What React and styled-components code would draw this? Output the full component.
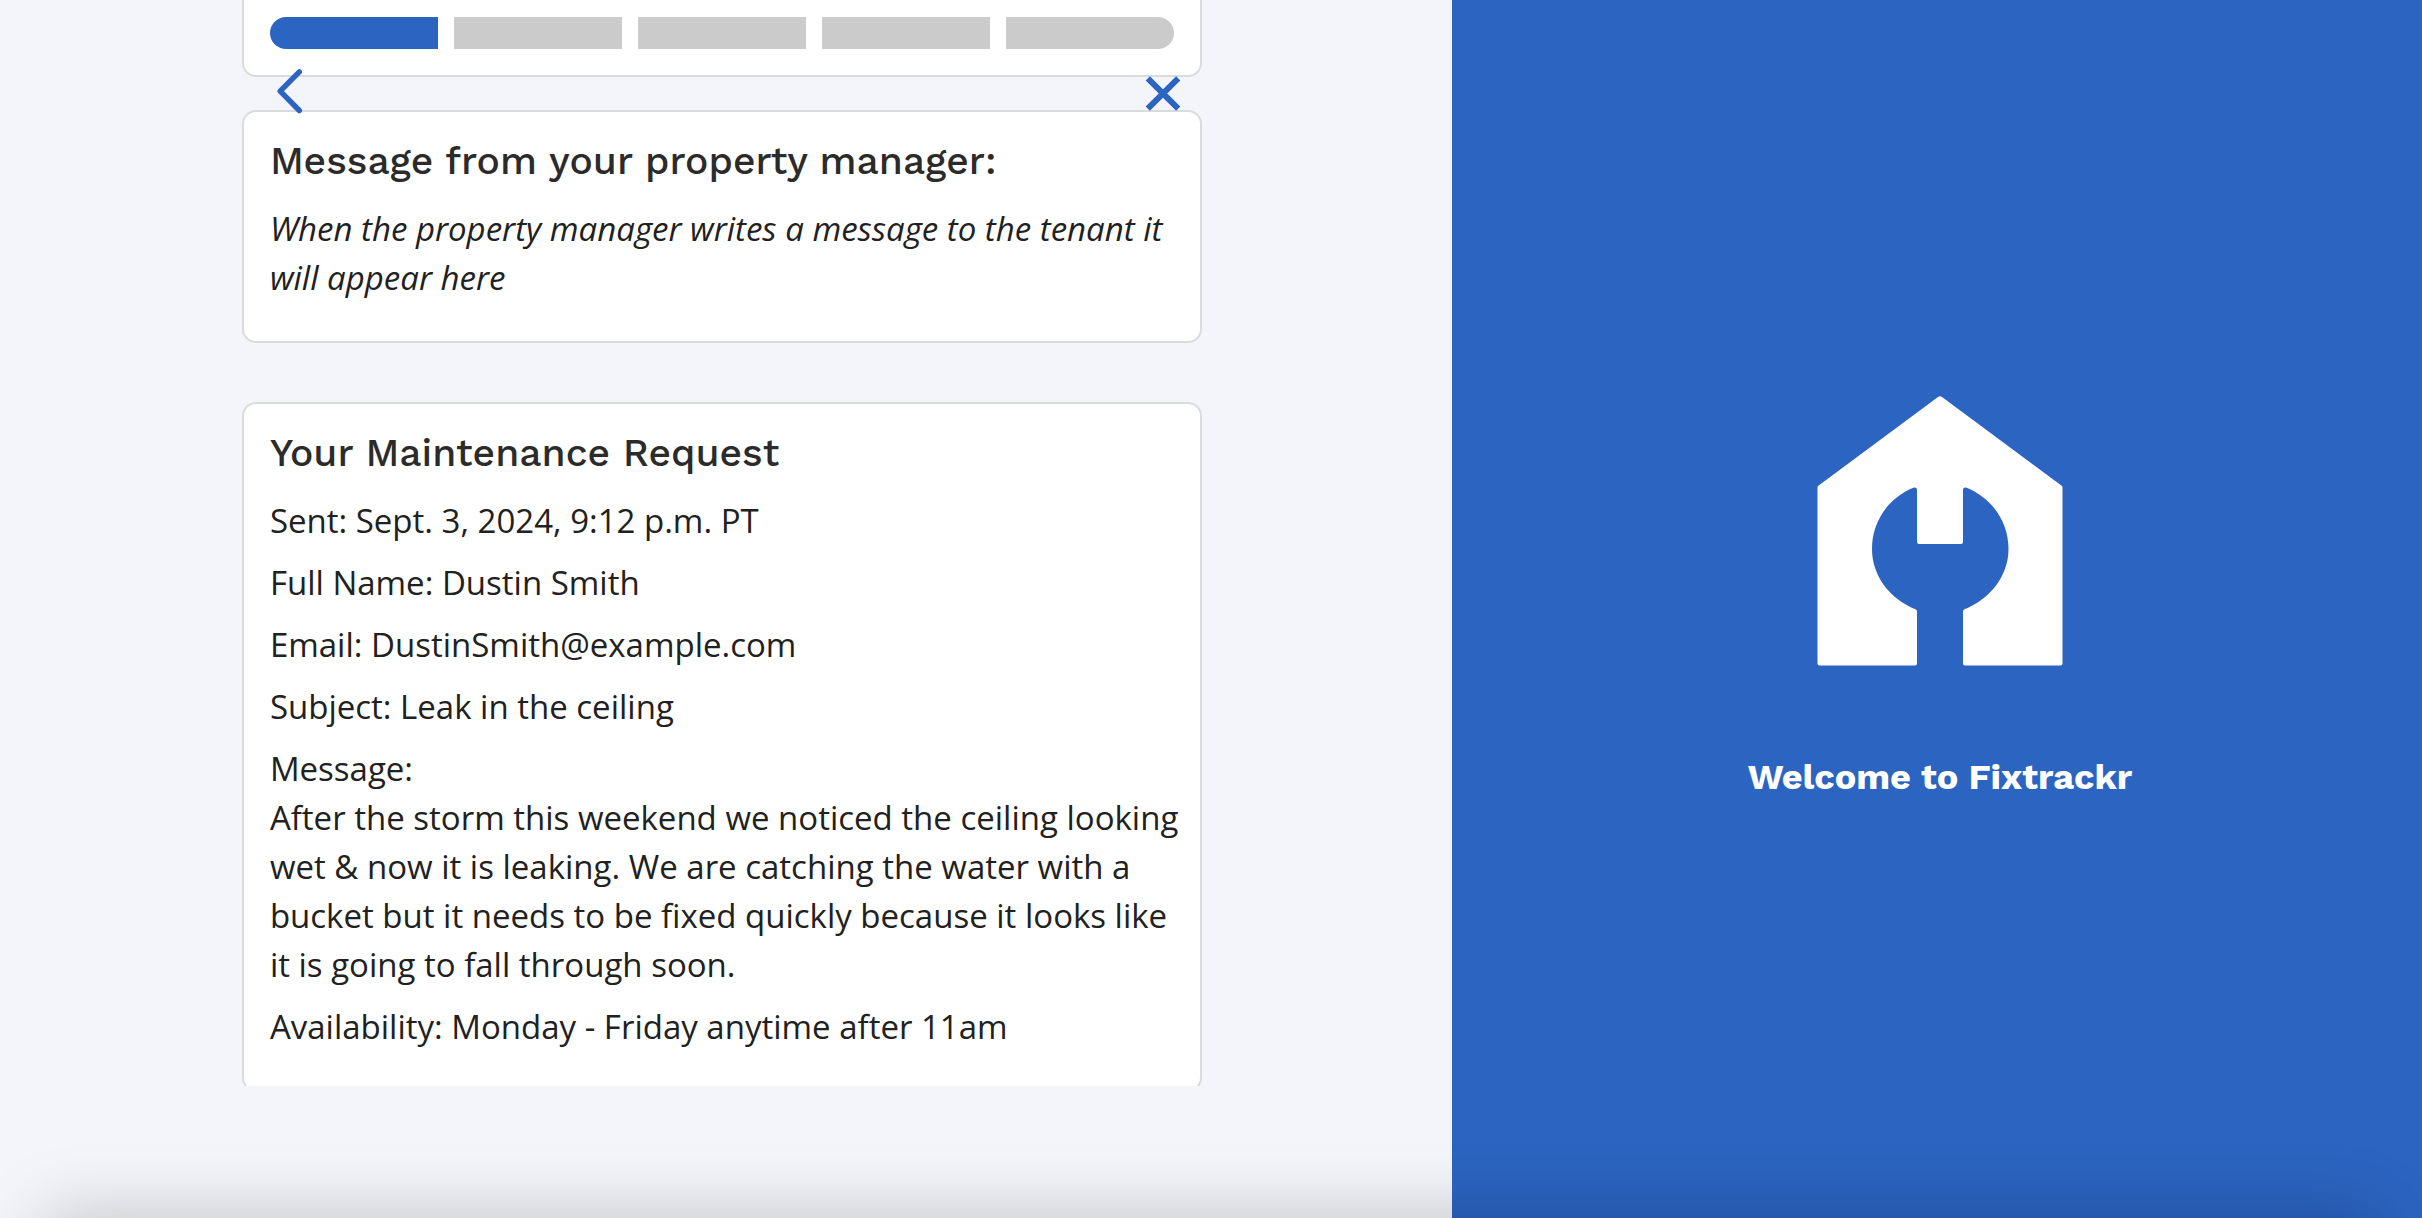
import React from "react";
import styled, { createGlobalStyle } from "styled-components";

const BLUE = "#2b64c1";

const GlobalStyle = createGlobalStyle`
  *, *::before, *::after { box-sizing: border-box; }
  body {
    margin: 0;
    background: #f3f5fa;
    color: #212121;
    font-family: "Open Sans", sans-serif;
    font-size: 33px;
    line-height: 49px;
  }
`;

const Page = styled.div`
  position: relative;
  display: flex;
  height: 100vh;
  overflow: hidden;
`;

const RequestPane = styled.main`
  flex: 0 0 59.95%;
  padding: 0 8px 132px 0;
`;

const ScrollArea = styled.div`
  display: flex;
  flex-direction: column;
  align-items: center;
  height: 100%;
  overflow: hidden;
`;

const Column = styled.div`
  display: flex;
  flex-direction: column;
  flex-shrink: 0;
  width: 66.5%;
`;

const Card = styled.section`
  padding: 26px 20px 26px 26px;
  background: #fff;
  border: 2px solid #dadcdc;
  border-radius: 14px;

  & + & { margin-top: 59px; }
`;

const ProgressCard = styled(Card)`
  padding: 17px 26px 26px;
  border-top: 0;
  border-radius: 0 0 14px 14px;
`;

const Steps = styled.ol`
  display: flex;
  gap: 16px;
  margin: 0;
  padding: 0;
  list-style: none;
`;

const Step = styled.li`
  flex: 1;
  height: 32px;
  background: ${(p) => (p.$done ? BLUE : "#cbcbcb")};

  &:first-child { border-radius: 16px 0 0 16px; }
  &:last-child { border-radius: 0 16px 16px 0; }
`;

const Nav = styled.nav`
  position: relative;
  z-index: 1;
  display: flex;
  align-items: center;
  justify-content: space-between;
  height: 33px;
  padding: 0 16px 0 24px;
`;

const IconButton = styled.button`
  display: flex;
  padding: 0;
  border: 0;
  background: none;
  color: ${BLUE};
  cursor: pointer;
`;

const Heading = styled.h2`
  margin: 0 0 20px;
  font-family: "Work Sans", Inter, sans-serif;
  font-size: 39px;
  font-weight: 500;
  line-height: 46px;
  color: #2b2b2b;
`;

const Text = styled.p`
  margin: 0 0 13px;
  font-style: ${(p) => (p.$italic ? "italic" : "normal")};
`;

const BrandPane = styled.aside`
  flex: 1;
  display: flex;
  flex-direction: column;
  align-items: center;
  justify-content: center;
  gap: 88px;
  padding: 0 0 22px 6px;
  background: ${BLUE};
  color: #fff;
`;

const Welcome = styled.h1`
  margin: 0;
  font-family: "Work Sans", Inter, sans-serif;
  font-size: 36px;
  font-weight: 700;
  line-height: 46px;
`;

const BottomShade = styled.div`
  position: absolute;
  top: 100%;
  left: 45px;
  right: 45px;
  height: 200px;
  box-shadow: 0 0 75px rgba(0, 0, 0, 0.22);
  pointer-events: none;
`;

function BackIcon() {
  return (
    <svg width="48" height="50" viewBox="0 0 48 50" fill="none" stroke="currentColor" strokeWidth="5.4" strokeLinecap="round" strokeLinejoin="round" aria-hidden="true">
      <path d="M33.300 2.900 14.200 22.200 33.300 41.500" />
    </svg>
  );
}

function CloseIcon() {
  return (
    <svg width="46" height="46" viewBox="0 0 46 46" fill="none" stroke="currentColor" strokeWidth="6" aria-hidden="true">
      <path d="M7.800 7.300 38.200 37.700M38.200 7.300 7.800 37.700" />
    </svg>
  );
}

function Logo() {
  return (
    <svg width="246" height="270" viewBox="0 0 246 270" role="img" aria-label="Fixtrackr logo">
      <path
        fill="#fff"
        d="M121 1Q123 -.4 125 1L245 90Q245.500 90.500 245.500 91.500V267.500Q245.500 269.500 243.500 269.500H148Q146 269.500 146 267.500V215.500Q146 214 147.500 213.300C173 203 191.500 180 191.500 153C191.500 125 174 101.500 149.500 91.800Q146 90.800 146 94V146Q146 148 144 148H102Q100 148 100 146V94Q100 90.800 96.500 91.800C72 101.500 55 125 55 153C55 180 73 203 98.500 213.300Q100 214 100 215.500V267.500Q100 269.500 98 269.500H2.500Q.5 269.500 .5 267.500V91.500Q.5 90.500 1 90Z"
      />
    </svg>
  );
}

const STEPS = [true, false, false, false, false];

const DETAILS = [
  "Sent: Sept. 3, 2024, 9:12 p.m. PT",
  "Full Name: Dustin Smith",
  "Email: DustinSmith@example.com",
  "Subject: Leak in the ceiling",
];

export default function App() {
  return (
    <>
      <GlobalStyle />
      <Page>
        <RequestPane>
          <ScrollArea>
            <Column>
              <ProgressCard as="div">
                <Steps aria-label="Progress: step 1 of 5">
                  {STEPS.map((done, i) => (
                    <Step key={i} $done={done} />
                  ))}
                </Steps>
              </ProgressCard>
              <Nav>
                <IconButton type="button" aria-label="Back">
                  <BackIcon />
                </IconButton>
                <IconButton type="button" aria-label="Close">
                  <CloseIcon />
                </IconButton>
              </Nav>
              <Card>
                <Heading>Message from your property manager:</Heading>
                <Text $italic>
                  When the property manager writes a message to the tenant it will appear here
                </Text>
              </Card>
              <Card>
                <Heading>Your Maintenance Request</Heading>
                {DETAILS.map((line) => (
                  <Text key={line}>{line}</Text>
                ))}
                <Text>
                  Message:
                  <br />
                  After the storm this weekend we noticed the ceiling looking wet &amp; now it is
                  leaking. We are catching the water with a bucket but it needs to be fixed quickly
                  because it looks like it is going to fall through soon.
                </Text>
                <Text>Availability: Monday - Friday anytime after 11am</Text>
              </Card>
            </Column>
          </ScrollArea>
        </RequestPane>
        <BrandPane>
          <Logo />
          <Welcome>Welcome to Fixtrackr</Welcome>
        </BrandPane>
        <BottomShade />
      </Page>
    </>
  );
}
